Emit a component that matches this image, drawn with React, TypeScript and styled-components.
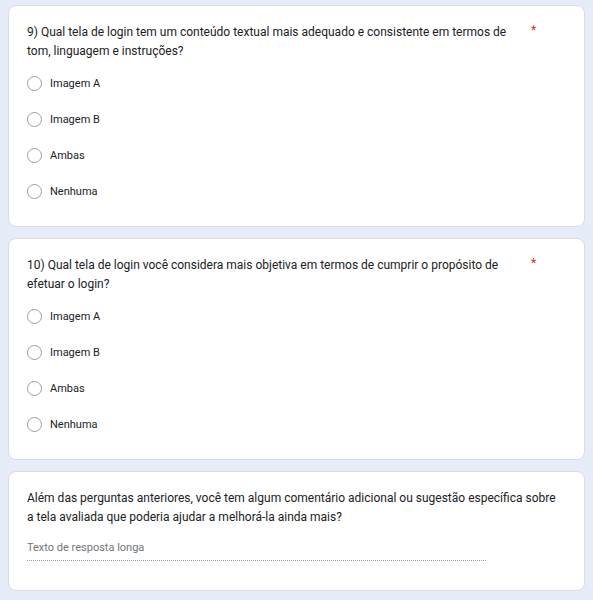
import React from "react";
import styled, { createGlobalStyle } from "styled-components";

const Global = createGlobalStyle`
  html, body { margin: 0; padding: 0; background: #e6ecf8; }
  body { font-family: Roboto, "Noto Sans", Arial, sans-serif; color: #202124; }
`;

const Page = styled.div`
  display: flex;
  flex-direction: column;
  gap: 11px;
  padding: 5px 8px 8px 8px;
`;

const Card = styled.section`
  background: #fff;
  border: 1px solid #dadce0;
  border-radius: 8px;
  padding: 17px 18px 17px 18px;
`;

const TitleRow = styled.div`
  display: flex;
  align-items: flex-start;
`;

const Title = styled.div<{ $width: number }>`
  width: ${(p) => p.$width}px;
  font-size: 12px;
  line-height: 19px;
  color: #202124;
`;

const Required = styled.span`
  color: #d93025;
  font-size: 12px;
  line-height: 14px;
  margin-left: 4px;
`;

const Options = styled.div`
  display: flex;
  flex-direction: column;
  margin-top: 4px;
`;

const Option = styled.label`
  display: flex;
  align-items: center;
  gap: 8px;
  height: 36px;
  font-size: 11px;
  color: #202124;
`;

const Radio = styled.span`
  box-sizing: border-box;
  width: 15px;
  height: 15px;
  border-radius: 50%;
  border: 1.5px solid #9aa0a6;
  flex: none;
`;

const Answer = styled.div`
  margin-top: 14px;
  width: 459px;
  padding-bottom: 5px;
  border-bottom: 1px dotted #9aa0a6;
  font-size: 11px;
  line-height: 14px;
  color: #70757a;
  margin-bottom: 12px;
`;

const choices = ["Imagem A", "Imagem B", "Ambas", "Nenhuma"];

const Question = ({ text }: { text: string }) => (
  <Card>
    <TitleRow>
      <Title $width={500}>{text}</Title>
      <Required>*</Required>
    </TitleRow>
    <Options>
      {choices.map((c) => (
        <Option key={c}>
          <Radio />
          {c}
        </Option>
      ))}
    </Options>
  </Card>
);

export default function App() {
  return (
    <>
      <Global />
      <Page>
        <Question text="9) Qual tela de login tem um conteúdo textual mais adequado e consistente em termos de tom, linguagem e instruções?" />
        <Question text="10) Qual tela de login você considera mais objetiva em termos de cumprir o propósito de efetuar o login?" />
        <Card>
          <Title $width={532}>
            Além das perguntas anteriores, você tem algum comentário adicional ou sugestão específica sobre a tela avaliada que poderia ajudar a melhorá-la ainda mais?
          </Title>
          <Answer>Texto de resposta longa</Answer>
        </Card>
      </Page>
    </>
  );
}
